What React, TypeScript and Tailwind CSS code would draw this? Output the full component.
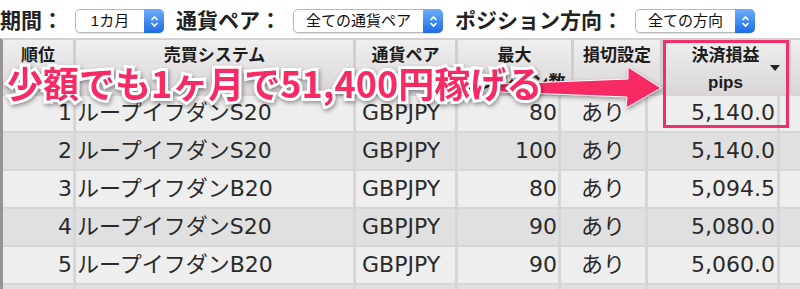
import React from "react";

const rows = [
  { rank: 1, name: "ループイフダンS20", pair: "GBPJPY", max: "80", stop: "あり", pnl: "5,140.0", bg: "bg-[#eeeeee]" },
  { rank: 2, name: "ループイフダンS20", pair: "GBPJPY", max: "100", stop: "あり", pnl: "5,140.0", bg: "bg-[#e0e0e0]" },
  { rank: 3, name: "ループイフダンB20", pair: "GBPJPY", max: "80", stop: "あり", pnl: "5,094.5", bg: "bg-[#eeeeee]" },
  { rank: 4, name: "ループイフダンS20", pair: "GBPJPY", max: "90", stop: "あり", pnl: "5,080.0", bg: "bg-[#e0e0e0]" },
  { rank: 5, name: "ループイフダンB20", pair: "GBPJPY", max: "90", stop: "あり", pnl: "5,060.0", bg: "bg-[#eeeeee]" },
  { rank: 6, name: "", pair: "", max: "", stop: "", pnl: "", bg: "bg-[#e0e0e0]" },
];

function Select({ label, className }: { label: string; className: string }) {
  return (
    <div
      className={`flex h-[24px] items-stretch rounded-[5px] border border-[#b9b9b9] bg-white shadow-[0_1px_1px_rgba(0,0,0,0.12)] ${className}`}
    >
      <span className="flex flex-1 items-center justify-center text-[15px] text-[#111]">{label}</span>
      <span className="-my-px -mr-px flex w-[20px] items-center justify-center rounded-r-[5px] bg-gradient-to-b from-[#6cadf9] to-[#1c6be4]">
        <svg width="9" height="13" viewBox="0 0 9 13">
          <path d="M1.5 5 L4.5 2 L7.5 5 M1.5 8 L4.5 11 L7.5 8" fill="none" stroke="white" strokeWidth="1.6" />
        </svg>
      </span>
    </div>
  );
}

export default function App() {
  const cjk = { fontFamily: '"Liberation Sans", "Noto Sans CJK JP", sans-serif' };
  const body = { fontFamily: '"DejaVu Sans", "Noto Sans CJK JP", sans-serif' };

  return (
    <div className="relative h-[289px] w-[800px] overflow-hidden bg-white" style={cjk}>
      {/* Filter bar */}
      <div className="flex h-[38px] items-center gap-3 pt-[4px]">
        <span className="text-[21px] font-bold text-[#222]">期間：</span>
        <Select label="1カ月" className="w-[89px]" />
        <span className="text-[21px] font-bold text-[#222]">通貨ペア：</span>
        <Select label="全ての通貨ペア" className="w-[150px]" />
        <span className="text-[21px] font-bold text-[#222]">ポジション方向：</span>
        <Select label="全ての方向" className="w-[120px]" />
      </div>

      {/* Table */}
      <div className="border-l-[3px] border-t-2 border-[#d2d2d2] [border-left-color:#959595]">
        {/* Header */}
        <div className="grid h-[55px] grid-cols-[70px_277px_99px_113px_86px_125px_1fr] gap-x-[3px] bg-[#cfcfcf] pb-px text-[17px] font-bold leading-[27px] text-[#1c1c1c]">
          {["順位", "売買システム", "通貨ペア", "最大\nポジション数", "損切設定", "決済損益\npips", ""].map((h, i) => (
            <div
              key={i}
              className="relative whitespace-pre-line bg-gradient-to-b from-[#efefef] to-[#d9d5d6] pt-[2px] text-center"
            >
              {h}
              {i === 5 && (
                <span className="absolute right-[8px] top-[25px] h-0 w-0 border-x-[5px] border-t-[6px] border-x-transparent border-t-[#222]" />
              )}
            </div>
          ))}
        </div>

        {/* Rows */}
        {rows.map((r) => (
          <div
            key={r.rank}
            className="grid h-[38px] grid-cols-[70px_277px_99px_100px_84px_129px_1fr] gap-x-[3px] bg-[#d6d6d6] pb-[2px] text-[22px] leading-none text-[#2a2a2a]"
            style={body}
          >
            <div className={`${r.bg} flex items-center justify-end pr-px`}>{r.name ? r.rank : ""}</div>
            <div className={`${r.bg} flex items-center pl-px`}>{r.name}</div>
            <div className={`${r.bg} flex items-center pl-[6px]`}>{r.pair}</div>
            <div className={`${r.bg} flex items-center justify-end pr-px`}>{r.max}</div>
            <div className={`${r.bg} flex items-center justify-center`}>{r.stop}</div>
            <div className={`${r.bg} flex items-center justify-end pr-[2px]`}>{r.pnl}</div>
            <div className={r.bg} />
          </div>
        ))}
      </div>

      {/* Annotation: highlight box + arrow */}
      <div className="pointer-events-none absolute left-[663px] top-[40px] h-[88px] w-[126px] border-[3px] border-[#f0306a]" />
      <svg
        className="pointer-events-none absolute left-0 top-0 drop-shadow-[1px_2px_2px_rgba(0,0,0,0.35)]"
        width="800"
        height="289"
      >
        <polygon
          points="500,84 628,79 628,67 661,88 626,108 627,97 500,92"
          fill="#f72a63"
          stroke="#fff"
          strokeWidth="1"
        />
      </svg>
      <div
        className="pointer-events-none absolute left-[7px] top-[62px] whitespace-nowrap text-[36px] font-bold leading-[40px] text-[#f72a63] [-webkit-text-stroke:6px_white] [paint-order:stroke_fill] drop-shadow-[1px_2px_2px_rgba(0,0,0,0.4)]"
        style={{ fontFamily: '"Noto Sans CJK JP", sans-serif' }}
      >
        少額でも1ヶ月で51,400円稼げる
      </div>
    </div>
  );
}
